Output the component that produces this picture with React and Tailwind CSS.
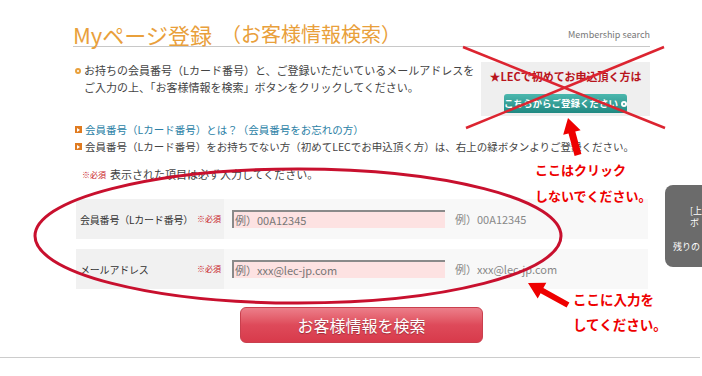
import React from "react";

// Myページ登録 search form with red hand-drawn annotations on top
const FONT = { fontFamily: '"Noto Sans CJK JP", "Noto Sans", sans-serif' };

const Required = () => (
  <span className="shrink-0 whitespace-nowrap text-[8px] text-[#c8161e]">※必須</span>
);

const FormRow = ({ label, placeholder, example, className = "" }) => (
  <div className={`flex h-[40px] ${className}`}>
    <div className="flex w-[148px] items-center justify-between bg-[#f1f1f1] pl-[4px] pr-[3px]">
      <span className="whitespace-nowrap text-[10px] tracking-[-0.2px] text-[#333]">{label}</span>
      <Required />
    </div>
    <div className="flex flex-1 items-center bg-[#f8f8f8] pl-[8px]">
      <div className="flex h-[18px] w-[213px] items-center border-l-2 border-t-2 border-[#8a8a8a] bg-[#fde2e2] pl-[1px] text-[11px] text-[#777]">
        {placeholder}
      </div>
      <span className="ml-[10px] text-[11px] text-[#888]">{example}</span>
    </div>
  </div>
);

const Annotations = () => (
  <svg
    className="pointer-events-none absolute left-0 top-0"
    width="702"
    height="376"
    viewBox="0 0 702 376"
  >
    <line x1="463" y1="47" x2="665" y2="128" stroke="#dc2430" strokeWidth="2.5" />
    <line x1="664" y1="47" x2="466" y2="128" stroke="#dc2430" strokeWidth="2.5" />
    <ellipse cx="298" cy="236" rx="263" ry="67" fill="none" stroke="#c8102e" strokeWidth="3" />
    <polygon
      fill="#ee0000"
      points="568,118 580.6,130.2 575.3,131.6 581.4,154.1 574.6,155.9 568.5,133.4 563.2,134.8"
    />
    <polygon
      fill="#ee0000"
      points="528,283 546.3,282.8 543.4,288.1 569.4,302.4 566.6,307.6 540.6,293.3 537.7,298.6"
    />
  </svg>
);

export default function App() {
  return (
    <div className="relative h-[376px] w-[702px] overflow-hidden bg-white" style={FONT}>
      <div className="ml-[73px] w-[577px] pt-[22px]">
        {/* title */}
        <div className="flex items-end justify-between border-b border-[#c8c8c8]">
          <h1 className="flex items-end text-[22px] leading-[24px] text-[#e9a03b]">
            <span>Myページ登録</span>
            <span className="ml-[9px] text-[20px]">（お客様情報検索）</span>
          </h1>
          <span className="mb-[5px] text-[9px] text-[#777]">Membership search</span>
        </div>

        {/* intro + new member box */}
        <div className="mt-[15px] flex justify-between">
          <div className="ml-[2px] flex text-[11px] leading-[17px] text-[#444]">
            <span className="mr-[3px] mt-[6px] h-[6px] w-[6px] rounded-full border-2 border-[#e9a03b]" />
            <p>
              お持ちの会員番号（Lカード番号）と、ご登録いただいているメールアドレスを
              <br />
              ご入力の上、「お客様情報を検索」ボタンをクリックしてください。
            </p>
          </div>
          <div className="flex h-[54px] w-[169px] flex-col items-center bg-[#efefef] pt-[6px]">
            <span className="text-[11px] font-bold leading-[16px] text-[#b8141c]">
              ★LECで初めてお申込頂く方は
            </span>
            <span className="mt-[10px] flex h-[19px] w-[123px] items-center justify-center gap-[3px] rounded-[3px] bg-gradient-to-b from-[#4bb8ae] to-[#1f8982] text-[9.5px] font-bold text-white">
              こちらからご登録ください
              <span className="h-[6px] w-[6px] rounded-full border-2 border-white" />
            </span>
          </div>
        </div>

        {/* links */}
        <div className="ml-[2px] mt-[5px] text-[10.5px] leading-[17px]">
          <div className="flex items-center">
            <span className="mr-[3px] flex h-[7px] w-[7px] items-center justify-center bg-[#e07b20]">
              <span className="h-0 w-0 border-y-[2px] border-l-[3px] border-y-transparent border-l-white" />
            </span>
            <span className="text-[#2b7fa6]">会員番号（Lカード番号）とは？（会員番号をお忘れの方）</span>
          </div>
          <div className="flex items-center text-[#444]">
            <span className="mr-[3px] flex h-[7px] w-[7px] items-center justify-center bg-[#e07b20]">
              <span className="h-0 w-0 border-y-[2px] border-l-[3px] border-y-transparent border-l-white" />
            </span>
            会員番号（Lカード番号）をお持ちでない方（初めてLECでお申込頂く方）は、右上の緑ボタンよりご登録ください。
          </div>
        </div>

        <div className="ml-[9px] mt-[11px] flex items-center gap-[4px] text-[11px] leading-[17px] text-[#444]">
          <Required />
          表示された項目は必ず入力してください。
        </div>

        {/* form */}
        <div className="ml-[3px] mt-[16px] w-[572px]">
          <FormRow label="会員番号（Lカード番号）" placeholder="例）00A12345" example="例）00A12345" />
          <FormRow
            className="mt-[10px]"
            label="メールアドレス"
            placeholder="例）xxx@lec-jp.com"
            example="例）xxx@lec-jp.com"
          />
        </div>

        <button className="ml-[167px] mt-[18px] flex h-[36px] w-[243px] items-center justify-center rounded-[6px] border border-[#c9404e] bg-gradient-to-b from-[#ec7e8a] via-[#de4a5a] to-[#d83a4b] text-[16px] text-white [text-shadow:0_1px_1px_rgba(0,0,0,0.3)]">
          お客様情報を検索
        </button>
      </div>

      <div className="mt-[14px] w-[700px] border-t border-[#ccc]" />

      {/* floating side tab */}
      <div className="absolute left-[665px] top-[185px] flex h-[82px] w-[50px] flex-col rounded-l-[8px] bg-[#6b6b6b] pl-[8px] pt-[20px] text-[9px] leading-[12px] text-white">
        <span className="pl-[17px]">[上</span>
        <span className="pl-[17px]">ボ</span>
        <span className="mt-[12px]">残りの</span>
      </div>

      <Annotations />

      <div className="absolute left-[535px] top-[157px] text-[13px] font-bold leading-[26px] text-[#ee0000]">
        ここはクリック
        <br />
        しないでください。
      </div>
      <div className="absolute left-[573px] top-[287px] text-[13.5px] font-bold leading-[25px] text-[#ee0000]">
        ここに入力を
        <br />
        してください。
      </div>
    </div>
  );
}
